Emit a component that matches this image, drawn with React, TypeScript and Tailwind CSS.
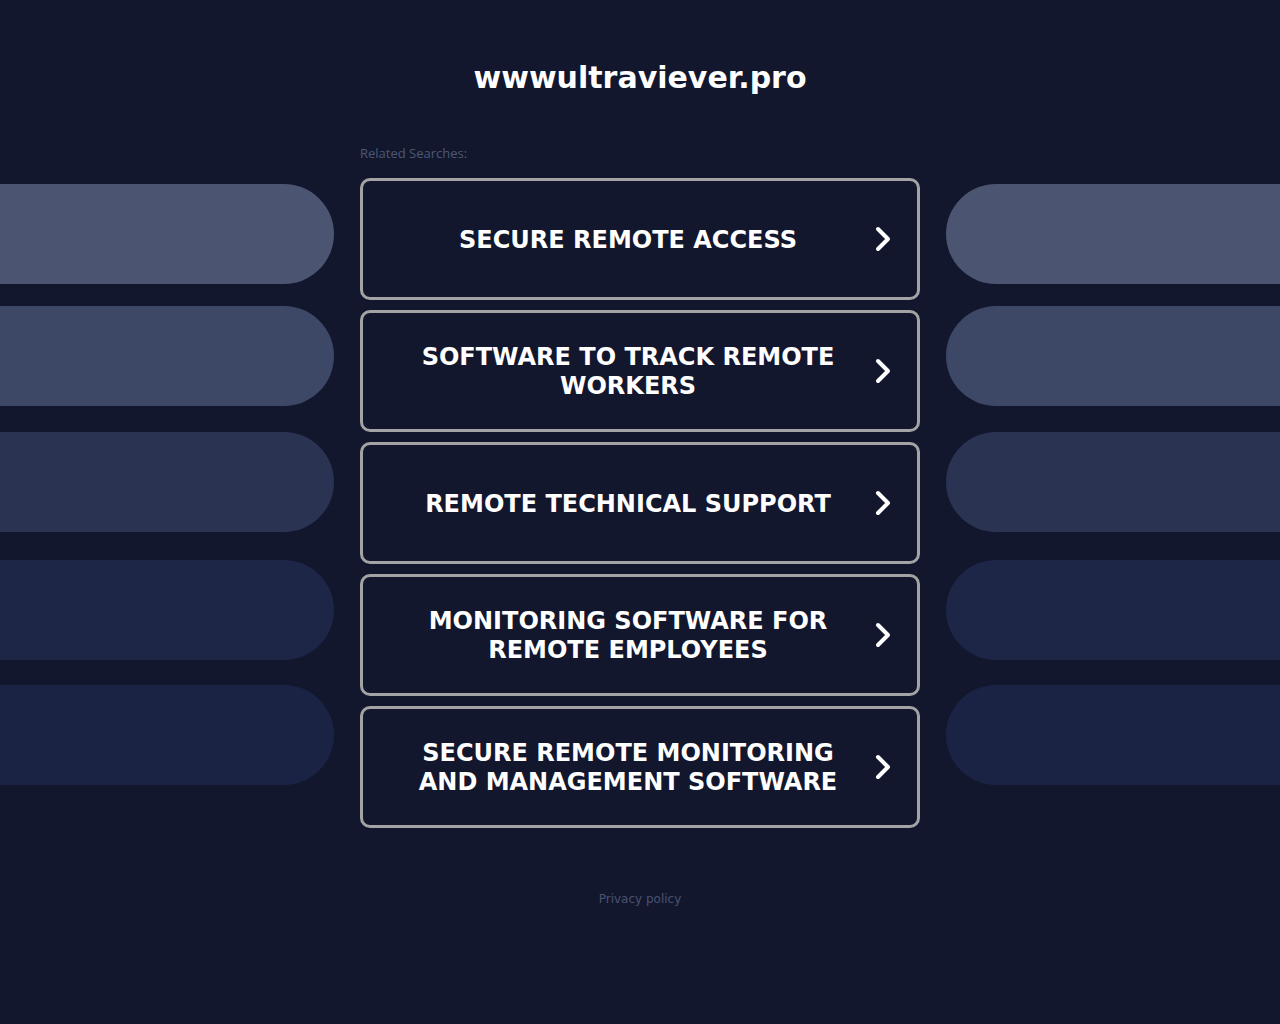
import React from "react";

const items = [
  ["SECURE REMOTE ACCESS"],
  ["SOFTWARE TO TRACK REMOTE", "WORKERS"],
  ["REMOTE TECHNICAL SUPPORT"],
  ["MONITORING SOFTWARE FOR", "REMOTE EMPLOYEES"],
  ["SECURE REMOTE MONITORING", "AND MANAGEMENT SOFTWARE"],
];

const pills = [
  { c: "bg-[#4b5571]", mt: "mt-[184px]" },
  { c: "bg-[#3d4766]", mt: "mt-[22px]" },
  { c: "bg-[#2a3352]", mt: "mt-[26px]" },
  { c: "bg-[#1d2647]", mt: "mt-[28px]" },
  { c: "bg-[#1b2344]", mt: "mt-[25px]" },
];

function Chevron() {
  return (
    <svg width="20" height="28" viewBox="0 0 20 28" fill="none">
      <path d="M5 4 L15 14 L5 24" stroke="white" strokeWidth="4" strokeLinecap="round" strokeLinejoin="round" />
    </svg>
  );
}

export default function App() {
  return (
    <div className="min-h-[1024px] w-full bg-[#12172e] overflow-hidden" style={{ fontFamily: '"DejaVu Sans", sans-serif' }}>
      <div className="pt-[59px] text-center text-white font-bold text-[30px] leading-[38px]">wwwultraviever.pro</div>
      <div className="flex mt-[-97px]">
        <div className="w-[334px] flex flex-col shrink-0">
          {pills.map((p, i) => (
            <div key={i} className={`${p.mt} h-[100px] rounded-r-[50px] ${p.c}`} />
          ))}
        </div>
        <div className="w-[560px] ml-[26px] shrink-0 flex flex-col">
          <div className="mt-[145px] h-[16px] text-[13px] leading-[16px] text-[#4d5875]" style={{ fontFamily: '"Open Sans", sans-serif' }}>Related Searches:</div>
          <div className="mt-[17px] flex flex-col gap-[10px]">
            {items.map((lines, i) => (
              <div key={i} className="h-[122px] rounded-[10px] border-[3px] border-[#a3a3a3] flex items-center pl-[40px] pr-[24px]">
                <div className="flex-1 text-center text-white font-bold text-[24px] leading-[29px] pt-[2px]">
                  {lines.map((l, j) => (
                    <div key={j}>{l}</div>
                  ))}
                </div>
                <div className="ml-[20px]"><Chevron /></div>
              </div>
            ))}
          </div>
          <div className="mt-[64px] text-center text-[12px] leading-[14px] text-[#4a5270]">Privacy policy</div>
        </div>
        <div className="flex-1 ml-[26px] flex flex-col">
          {pills.map((p, i) => (
            <div key={i} className={`${p.mt} h-[100px] rounded-l-[50px] ${p.c}`} />
          ))}
        </div>
      </div>
    </div>
  );
}
